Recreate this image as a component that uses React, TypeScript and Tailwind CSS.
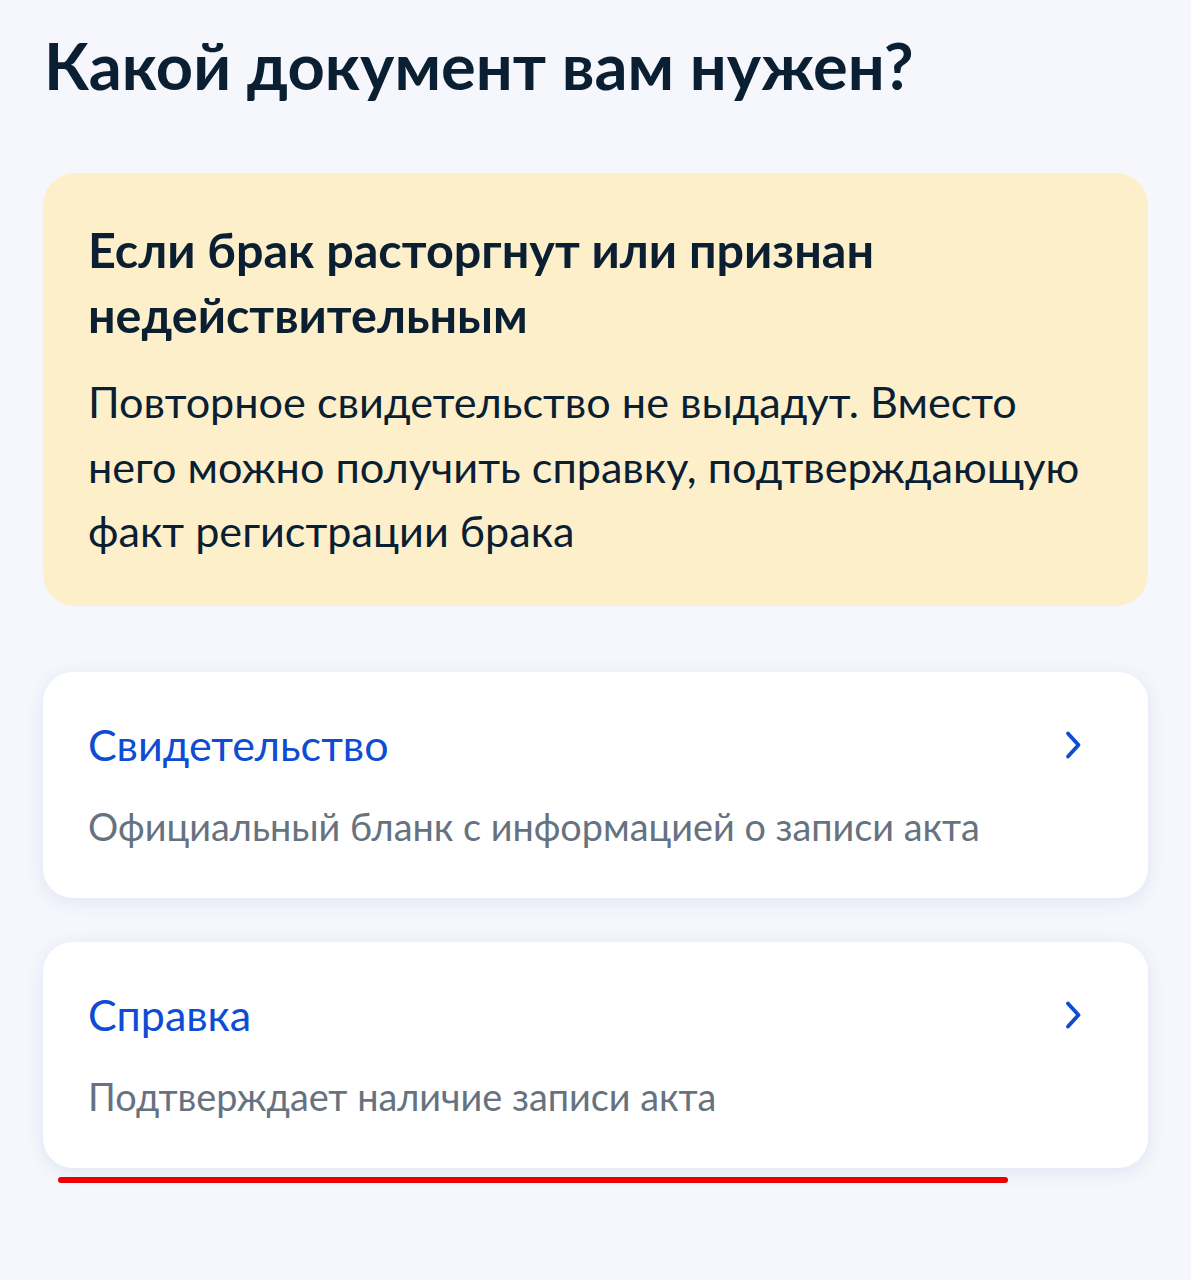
import { ReactNode } from 'react'

function Chevron() {
  return (
    <svg width="18" height="30" viewBox="0 0 18 30" fill="none" className="shrink-0">
      <path d="M4 3.5 L14.5 15 L4 26.5" stroke="#0d4cd3" strokeWidth="3.8" strokeLinecap="round" strokeLinejoin="round" />
    </svg>
  )
}

function OptionCard({ title, text }: { title: ReactNode; text: ReactNode }) {
  return (
    <div className="bg-white rounded-[30px] shadow-[0_4px_18px_rgba(30,70,160,0.10)] pl-[45px] pr-[66px] pt-[47px] pb-[47px]">
      <div className="flex items-center justify-between">
        <div className="text-[43px] leading-[52px] text-[#0d4cd3]">{title}</div>
        <Chevron />
      </div>
      <div className="mt-[32px] text-[37.8px] leading-[48px] text-[#66727f]">{text}</div>
    </div>
  )
}

export default function App() {
  return (
    <div className="min-h-[1280px] bg-[#f5f7fc] font-['Lato','Noto_Sans',sans-serif] px-[43px] pt-[26px]">
      <h1 className="pl-[1px] text-[65px] leading-[78px] font-bold text-[#0b1f33]">
        Какой документ вам нужен?
      </h1>

      {/* Info block */}
      <div className="mt-[69px] bg-[#feefcb] rounded-[32px] pl-[45px] pr-[30px] pt-[44px] pb-[43px] text-[#0b1f33]">
        <div className="text-[48.5px] leading-[65px] font-bold">
          Если брак расторгнут или признан
          <br />
          недействительным
        </div>
        <div className="mt-[22px] text-[43.2px] leading-[64.5px]">
          Повторное свидетельство не выдадут. Вместо
          <br />
          него можно получить справку, подтверждающую
          <br />
          факт регистрации брака
        </div>
      </div>

      {/* Options */}
      <div className="mt-[66px] flex flex-col gap-[44px]">
        <OptionCard title="Свидетельство" text="Официальный бланк с информацией о записи акта" />
        <OptionCard title="Справка" text="Подтверждает наличие записи акта" />
      </div>

      <div className="mt-[9px] ml-[15px] w-[950px] h-[6px] rounded-full bg-[#ee0000]" />
    </div>
  )
}
